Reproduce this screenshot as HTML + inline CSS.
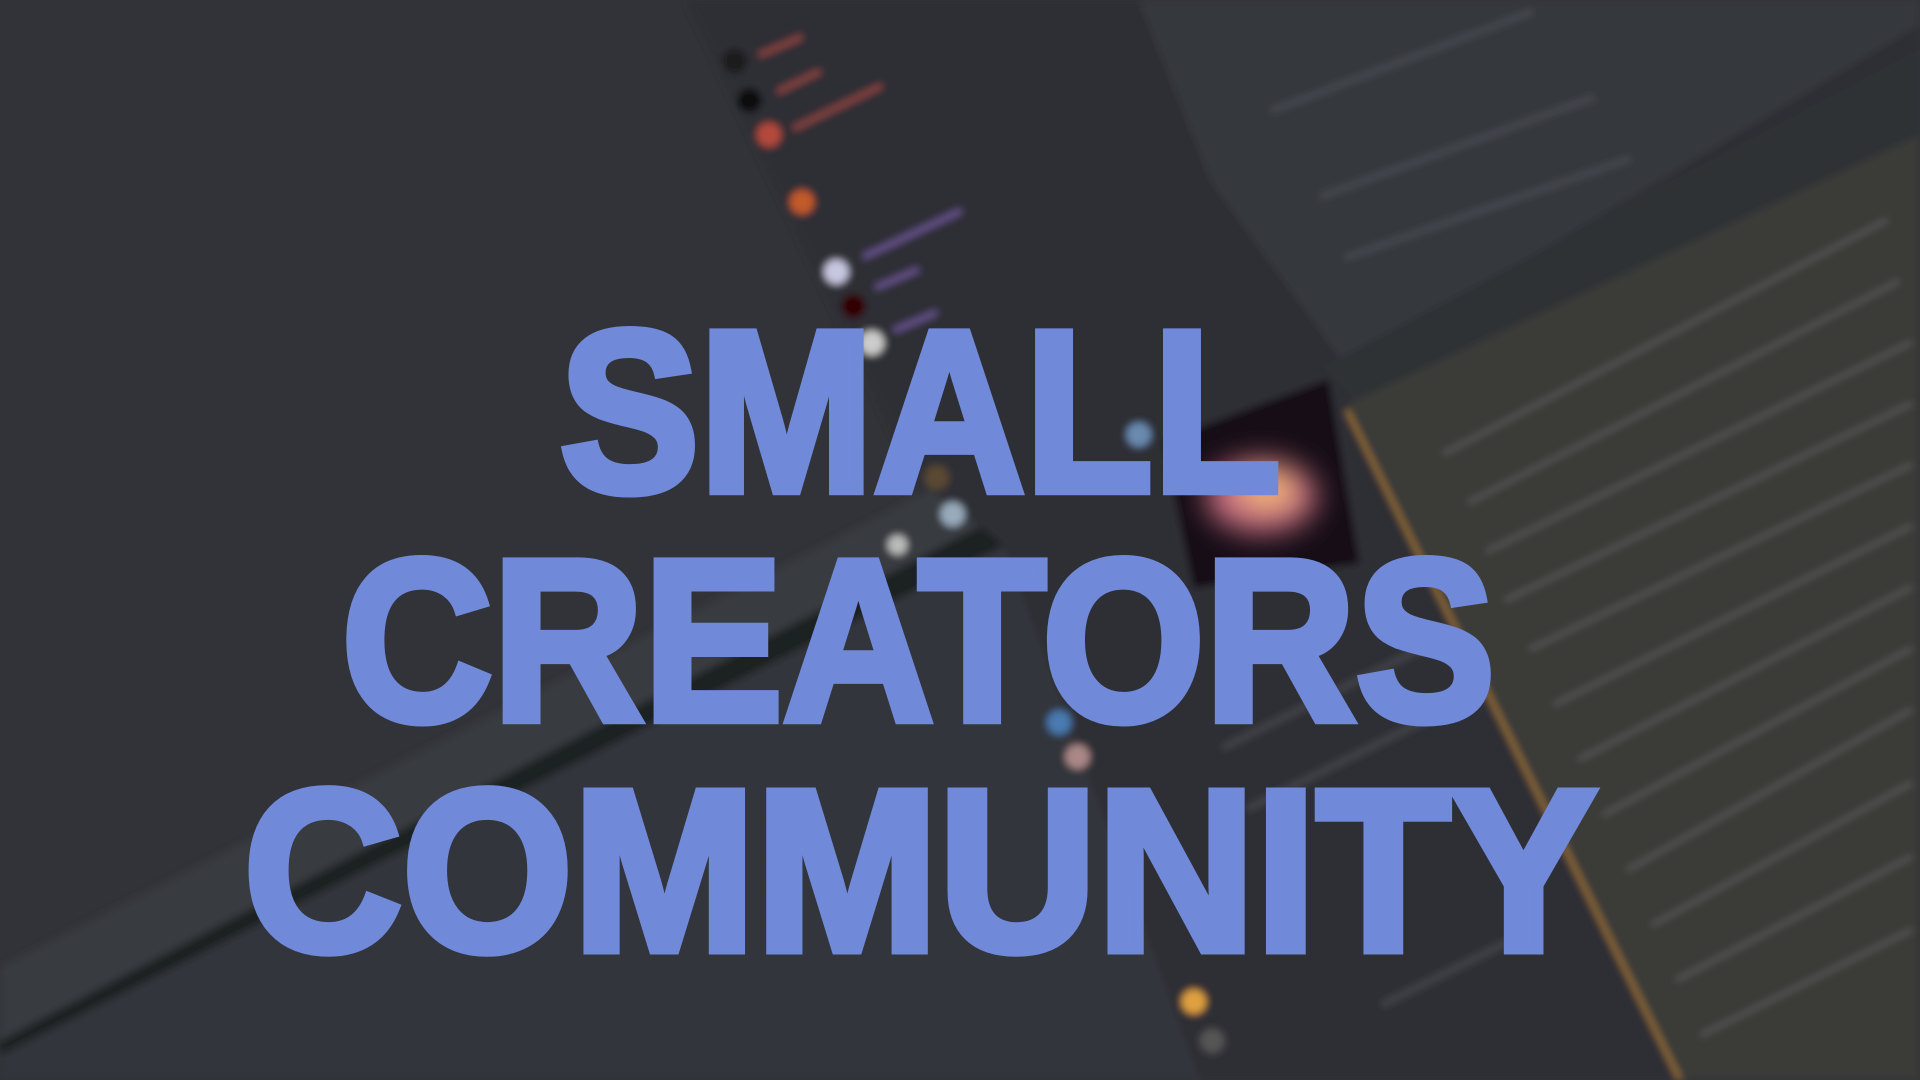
<!DOCTYPE html>
<html><head><meta charset="utf-8"><style>
html,body{margin:0;padding:0;width:1920px;height:1080px;overflow:hidden;background:#313338}
svg{display:block}
</style></head><body>
<svg width="1920" height="1080" viewBox="0 0 1568 882" preserveAspectRatio="none" xmlns="http://www.w3.org/2000/svg">
<defs>
<filter id="b" x="-20%" y="-20%" width="140%" height="140%"><feGaussianBlur stdDeviation="3"/></filter>
<filter id="b2" x="-50%" y="-50%" width="200%" height="200%"><feGaussianBlur stdDeviation="12"/></filter>
</defs>
<rect width="1568" height="882" fill="#313338"/>
<g filter="url(#b)">
<polygon points="560,0 1568,0 1568,882 960,882 760,420" fill="#2d2f34"/>
<polygon points="930,0 1568,0 1568,20 1100,300 990,150" fill="#35373c"/>
<polygon points="1080,300 1568,40 1568,110 1110,330" fill="#2f3136"/>
<polygon points="0,790 760,400 800,430 0,850" fill="#393b41"/>
<polygon points="0,850 800,430 820,445 0,862" fill="#1f2023"/>
<polygon points="0,862 820,445 980,882 0,882" fill="#33353b"/>
<polygon points="1100,330 1568,110 1568,882 1372,882" fill="#3b3a38"/>
<line x1="1100" y1="335" x2="1372" y2="882" stroke="#a57a35" stroke-width="3"/>
<g stroke="#7e7d79" stroke-width="4" opacity="0.4" stroke-linecap="round">
<line x1="1180" y1="370" x2="1540" y2="180"/><line x1="1200" y1="410" x2="1550" y2="230"/>
<line x1="1215" y1="450" x2="1560" y2="280"/><line x1="1230" y1="490" x2="1560" y2="330"/>
<line x1="1250" y1="530" x2="1560" y2="380"/><line x1="1270" y1="575" x2="1560" y2="430"/>
<line x1="1290" y1="620" x2="1560" y2="480"/><line x1="1310" y1="665" x2="1560" y2="530"/>
<line x1="1330" y1="710" x2="1560" y2="580"/><line x1="1350" y1="755" x2="1560" y2="640"/>
<line x1="1370" y1="800" x2="1560" y2="700"/><line x1="1390" y1="845" x2="1560" y2="760"/>
</g>
<g stroke="#6e6f74" stroke-width="4" opacity="0.4" stroke-linecap="round">
<line x1="1040" y1="90" x2="1250" y2="10"/><line x1="1080" y1="160" x2="1300" y2="80"/>
<line x1="1100" y1="210" x2="1330" y2="130"/>
<line x1="1000" y1="610" x2="1180" y2="520"/><line x1="1020" y1="660" x2="1180" y2="580"/>
<line x1="1130" y1="820" x2="1250" y2="760"/>
</g>
<g>
<circle cx="600" cy="50" r="10" fill="#1a1a1a"/><circle cx="612" cy="82" r="10" fill="#111"/>
<circle cx="628" cy="110" r="10" fill="#b34a3a"/><circle cx="655" cy="165" r="10" fill="#c25a2a"/>
<circle cx="683" cy="222" r="10" fill="#c7c7e0"/><circle cx="697" cy="250" r="10" fill="#300"/>
<circle cx="712" cy="280" r="10" fill="#ccc"/><circle cx="765" cy="390" r="10" fill="#5a4a30"/>
<circle cx="778" cy="420" r="10" fill="#9ab"/><circle cx="733" cy="445" r="8" fill="#bbb"/>
<circle cx="865" cy="590" r="10" fill="#4a7ab0"/><circle cx="880" cy="618" r="10" fill="#a88"/>
<circle cx="975" cy="818" r="10" fill="#e0a040"/><circle cx="990" cy="850" r="10" fill="#555"/>
<circle cx="930" cy="355" r="10" fill="#6a8ab0"/>
</g>
<g stroke="#c0504a" stroke-width="4" opacity="0.7"><line x1="620" y1="45" x2="655" y2="30"/><line x1="635" y1="75" x2="670" y2="58"/><line x1="648" y1="105" x2="720" y2="70"/></g>
<g stroke="#8a6ac0" stroke-width="4" opacity="0.7"><line x1="705" y1="210" x2="785" y2="172"/><line x1="715" y1="235" x2="750" y2="220"/><line x1="730" y1="270" x2="765" y2="255"/></g>
<polygon points="950,360 1085,310 1110,460 975,480" fill="#141016"/>
</g>
<g filter="url(#b2)">
<ellipse cx="1030" cy="405" rx="45" ry="30" fill="#e07a90" opacity="0.9"/>
<ellipse cx="1035" cy="400" rx="22" ry="15" fill="#f0b870"/>
</g>
<g font-family="Liberation Sans, sans-serif" font-weight="bold" fill="#7089d9" stroke="#7089d9" stroke-width="7" stroke-linejoin="miter" font-size="188">
<text x="457" y="401" textLength="589" lengthAdjust="spacingAndGlyphs">SMALL</text>
<text x="279" y="588" textLength="942" lengthAdjust="spacingAndGlyphs">CREATORS</text>
<text x="199" y="776" textLength="1105" lengthAdjust="spacingAndGlyphs">COMMUNITY</text>
</g>
</svg>
</body></html>
